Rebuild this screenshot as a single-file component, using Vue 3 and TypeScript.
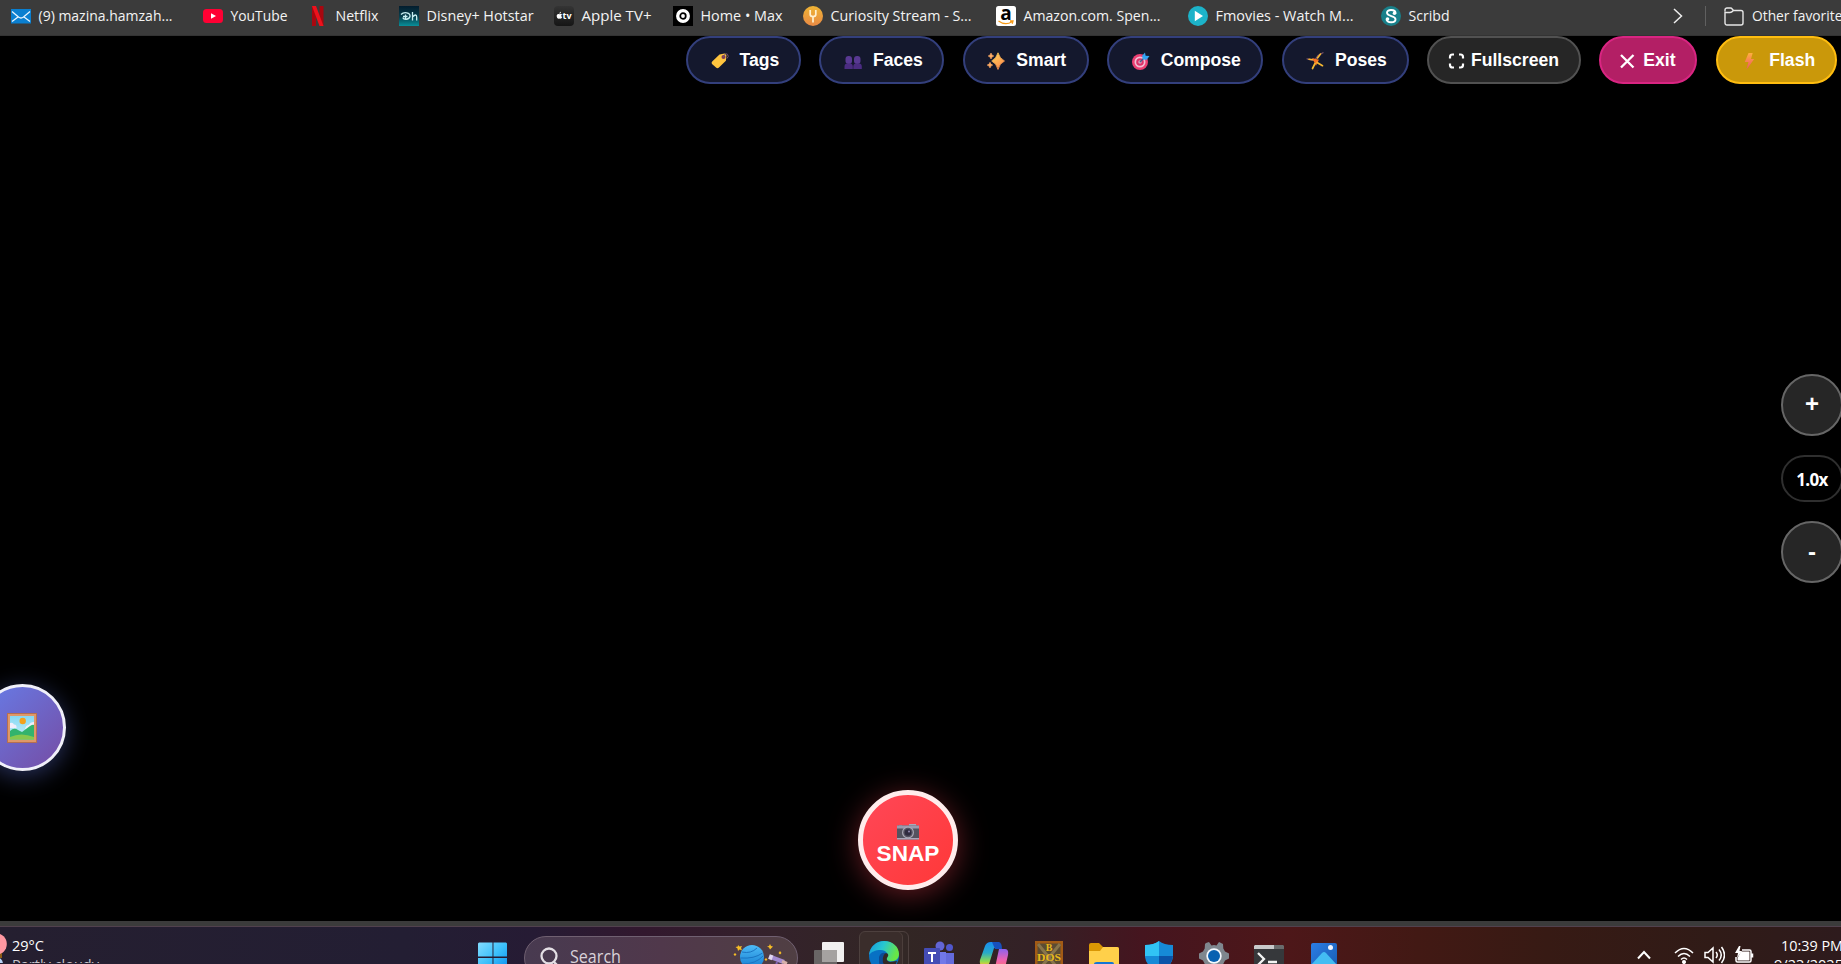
<script setup lang="ts">
interface Bookmark {
  id: string
  label: string
  width: number
}

interface Mode {
  id: string
  label: string
}

const bookmarks: Bookmark[] = [
  { id: 'mail', label: '(9) mazina.hamzah...', width: 134 },
  { id: 'youtube', label: 'YouTube', width: 57 },
  { id: 'netflix', label: 'Netflix', width: 43 },
  { id: 'disney', label: 'Disney+ Hotstar', width: 107 },
  { id: 'apple', label: 'Apple TV+', width: 70 },
  { id: 'max', label: 'Home • Max', width: 82 },
  { id: 'curiosity', label: 'Curiosity Stream - S...', width: 141 },
  { id: 'amazon', label: 'Amazon.com. Spen...', width: 137 },
  { id: 'fmovies', label: 'Fmovies - Watch M...', width: 138 },
  { id: 'scribd', label: 'Scribd', width: 41 },
]

const modes: Mode[] = [
  { id: 'tags', label: 'Tags' },
  { id: 'faces', label: 'Faces' },
  { id: 'smart', label: 'Smart' },
  { id: 'compose', label: 'Compose' },
  { id: 'poses', label: 'Poses' },
  { id: 'fullscreen', label: 'Fullscreen' },
  { id: 'exit', label: 'Exit' },
  { id: 'flash', label: 'Flash' },
]

const apps: string[] = ['tasks', 'edge', 'teams', 'copilot', 'dos', 'files', 'shield', 'settings', 'terminal', 'photos']
</script>

<template>
  <div class="screen">
    <header class="favorites">
      <nav class="links">
        <a v-for="b in bookmarks" :key="b.id" class="link">
          <svg class="fav" viewBox="0 0 20 20">
            <g v-if="b.id === 'mail'">
              <rect y="3" width="20" height="14.500" fill="#0a7fd0" />
              <path d="M1 5.500 7.500 11Q10 13 12.500 11L19 5.500M1 15.500 7 11M19 15.500 13 11" fill="none" stroke="#e8f5ff" stroke-width="1.300" />
            </g>
            <g v-else-if="b.id === 'youtube'">
              <rect y="3" width="20" height="14" rx="3.500" fill="#ff0033" />
              <path d="M8 7.200v5.600l5-2.800z" fill="#fff" />
            </g>
            <g v-else-if="b.id === 'netflix'">
              <path d="M4 0h4v20H4zM11.500 0h4v20h-4z" fill="#a8070f" />
              <path d="M4 0h4l7.500 20h-4z" fill="#ee111c" />
            </g>
            <g v-else-if="b.id === 'disney'">
              <defs><linearGradient id="dh" x2="0" y2="1"><stop stop-color="#031d2e" /><stop offset=".55" stop-color="#07404e" /><stop offset="1" stop-color="#08909a" /></linearGradient></defs>
              <rect width="20" height="20" fill="url(#dh)" />
              <path d="M2 8.500C5 5.500 11.500 6.500 11 10.500 10 14 4 14 4 11.500M4 10.500h4.500M6.500 8.500v5M13.500 6v8.500M13.500 11q4-4 4.200 0v3.500" fill="none" stroke="#c8eef1" stroke-width="1.300" />
            </g>
            <g v-else-if="b.id === 'apple'">
              <defs><linearGradient id="atv" x2="0" y2="1"><stop stop-color="#343434" /><stop offset="1" stop-color="#151515" /></linearGradient></defs>
              <rect width="20" height="20" rx="4" fill="url(#atv)" />
              <path d="M5.500 8.300C3.500 7.200 2.300 9 2.800 10.800c.5 2 1.700 2.300 2.700 1.700 1.200.6 2.200 0 2.600-1.400-1.200-.6-1.200-1.800-.1-2.600-.7-.7-1.600-.6-2.500-.2zM5.400 7.800c0-1.200.6-1.800 1.600-2 0 1.200-.6 1.900-1.600 2z" fill="#fff" />
              <text x="8.500" y="12.900" class="atv" textLength="9" lengthAdjust="spacingAndGlyphs">tv</text>
            </g>
            <g v-else-if="b.id === 'max'">
              <rect width="20" height="20" fill="#000" />
              <circle cx="10" cy="10" r="5.300" fill="none" stroke="#fff" stroke-width="3.300" />
              <circle cx="10" cy="10" r="1.900" fill="#fff" />
            </g>
            <g v-else-if="b.id === 'curiosity'">
              <defs><linearGradient id="cs" x2="0" y2="1"><stop stop-color="#eeb334" /><stop offset="1" stop-color="#e98a45" /></linearGradient></defs>
              <circle cx="10" cy="10" r="10" fill="url(#cs)" />
              <path d="M7.200 4v4.500q0 2 2.800 2 2.800 0 2.800-2V4M10 10v6.500" fill="none" stroke="#fff0cf" stroke-width="1.700" />
            </g>
            <g v-else-if="b.id === 'amazon'">
              <rect width="20" height="20" rx="2.500" fill="#fff" />
              <text x="4.200" y="13.700" class="amz">a</text>
              <path d="M2.500 15q7 5 13.500.7M14 15h3l-.8 2.700" fill="none" stroke="#f79a17" stroke-width="1.300" />
            </g>
            <g v-else-if="b.id === 'fmovies'">
              <circle cx="10" cy="10" r="10" fill="#1cb3c9" />
              <path d="M6.800 4.800v10.400l8.200-5.200z" fill="#fff" />
            </g>
            <g v-else>
              <circle cx="10" cy="10" r="10" fill="#19808a" />
              <path d="M14.600 7.200C14.300 3.200 6 2.900 6 6.800c0 4 8.500 2.500 8.500 6.400 0 4.200-8.400 4-9 .2" fill="none" stroke="#fff" stroke-width="1.900" />
              <circle cx="13.500" cy="7.300" r="1.800" fill="#fff" /><circle cx="6.500" cy="13" r="1.800" fill="#fff" />
            </g>
          </svg>
          <svg class="label" :width="b.width" height="24">
            <text x="-.5" y="17" :textLength="b.width" lengthAdjust="spacingAndGlyphs">{{ b.label }}</text>
          </svg>
        </a>
      </nav>
      <svg class="more" viewBox="0 0 10 16"><path d="M1 1l7.500 7L1 15" /></svg>
      <i class="divider"></i>
      <svg class="folder" viewBox="0 0 20 20"><path d="M1 4.500V3a2 2 0 0 1 2-2h3.500q1 0 1.700 1L9.500 3.500H17a2 2 0 0 1 2 2V16a2 2 0 0 1-2 2H3a2 2 0 0 1-2-2V5.500H6Q7.500 5.500 9.500 3.500" /></svg>
      <svg class="label" width="98" height="24"><text x="0" y="17" textLength="97" lengthAdjust="spacingAndGlyphs">Other favorites</text></svg>
    </header>

    <main class="camera">
      <div class="modes">
        <button v-for="m in modes" :key="m.id" class="mode" :class="m.id">
          <svg class="glyph" viewBox="0 0 18 18">
            <g v-if="m.id === 'tags'">
              <path d="M1.200 9.500 8.500 2.400 13.500 1.500q2 .1 1.900 2l-.5 5.200-7.200 7q-1.400 1-2.700-.2L1 12q-1-1.200.2-2.500z" fill="#ffc43e" />
              <circle cx="12.500" cy="5" r="2" fill="#7d3c56" /><path d="M12.500 5q1.500-4.500 4-2.700 1.800 2-.6 4.300" fill="none" stroke="#78506e" />
            </g>
            <g v-else-if="m.id === 'faces'" fill="#593993">
              <rect x="1.500" y="4" width="6.500" height="8" rx="3" /><rect x="10" y="4" width="6.500" height="8" rx="3" />
              <path d="M.5 17v-2.500q0-3 3-3h2.500q2.800 0 2.800 3V17zM9.300 17v-2.500q0-3 3-3H15q2.800 0 2.800 3V17z" fill="#4b2c82" />
            </g>
            <g v-else-if="m.id === 'smart'">
              <defs><linearGradient id="sp" x2=".6" y2="1"><stop stop-color="#ffd85b" /><stop offset="1" stop-color="#ff8d4c" /></linearGradient></defs>
              <path d="M11 .8q1.500 5.500 6.500 8.200-5 2.300-6.500 8.500Q9.500 11.300 4.700 9 9.500 6.300 11 .8z" fill="url(#sp)" stroke="url(#sp)" stroke-width=".8" />
              <path d="M4 1q.5 2.500 2.800 3Q4.500 4.500 4 7 3.500 4.500 1.200 4 3.500 3.500 4 1zM3 10.300q.4 2.300 2.700 2.800Q3.400 13.600 3 16 2.600 13.600.2 13.100 2.600 12.600 3 10.300z" fill="#ffab64" stroke="#ffab64" stroke-width=".6" />
            </g>
            <g v-else-if="m.id === 'compose'">
              <circle cx="8" cy="10" r="8" fill="#ec3f72" /><circle cx="8" cy="10" r="5.500" fill="#f0bfd4" /><circle cx="8" cy="10" r="3.800" fill="#dc3268" /><circle cx="8" cy="10" r="1.800" fill="#db9ab8" />
              <path d="M8 10l5-5" stroke="#435e8b" stroke-width="1.500" /><path d="M10 4 13 .5l.6 3.200L17.500 4l-2.800 3.700-3.600-.3z" fill="#32a4f4" />
            </g>
            <g v-else-if="m.id === 'poses'" fill="none" stroke-linecap="round">
              <path d="M1 6.800 6 8h3l3-4.500L17 .8" stroke="#76506b" stroke-width="1.300" />
              <path d="M3 7.300l4 .4M11.500 6l3-4" stroke="#f7b932" stroke-width="1.600" />
              <path d="M8 7.500l2 4 1.500-3z" fill="#f97324" stroke="#f97324" stroke-width="2" />
              <path d="M9 11.500 6.500 16.500M11 10.500l5.500 3.200" stroke="#f5b832" stroke-width="1.700" />
            </g>
            <path v-else-if="m.id === 'fullscreen'" d="M2 6.500V5q0-2.500 2.500-2.500H6M11 2.500h1.500Q15 2.500 15 5v1.500M15 11.500V13q0 2.500-2.500 2.500H11M6 15.500H4.500Q2 15.500 2 13v-1.500" fill="none" stroke="#fff" stroke-width="2.200" />
            <path v-else-if="m.id === 'exit'" d="M2 3 14.500 15.500M14.500 3 2 15.500" fill="none" stroke="#fff" stroke-width="2.300" />
            <g v-else>
              <defs><linearGradient id="fl" x2="0" y2="1"><stop stop-color="#ffb03f" /><stop offset="1" stop-color="#ef536b" /></linearGradient></defs>
              <path d="M8.500 1h4.200L11 7h3.200L6.500 17.500 8.500 10H4.800z" fill="url(#fl)" />
            </g>
          </svg>
          <span>{{ m.label }}</span>
        </button>
      </div>

      <aside class="zoom">
        <button class="step">+</button>
        <output class="level">1.0x</output>
        <button class="step minus">-</button>
      </aside>

      <button class="gallery">
        <svg viewBox="0 0 30 30">
          <defs><linearGradient id="sky" x2="0" y2="1"><stop stop-color="#86d9f4" /><stop offset="1" stop-color="#c9effa" /></linearGradient></defs>
          <rect width="30" height="30" fill="#b66f50" /><rect x="1" y="1" width="28" height="28" fill="#df9868" />
          <rect x="3" y="3" width="24" height="23.500" fill="url(#sky)" />
          <path d="M3 10q3-1 4 1.500 3 0 2.500 3.500H3zM27 9q-4 0-5 3-3 0-4 4h9z" fill="#f1eefb" />
          <circle cx="15.700" cy="8" r="3.200" fill="#f4a11d" />
          <path d="M3 18q4-4 8-1l4 2 8-6q3-2 4-1v14.500H3z" fill="#32b36d" />
          <path d="M3 24q11-5 24 0v2.500H3z" fill="#86c84e" />
        </svg>
      </button>

      <button class="snap">
        <svg viewBox="0 0 22 16">
          <path d="M2 1h3v2H2zM12 0h7v3h-7z" fill="#a9a8b9" />
          <rect y="1.500" width="22" height="14" rx="1" fill="#55535f" />
          <rect y="1.500" width="22" height="3" fill="#9b9aad" /><rect y="14" width="22" height="1.500" fill="#aaa9bc" />
          <circle cx="11" cy="8.500" r="6" fill="#aaa7b6" /><circle cx="11" cy="8.500" r="4.800" fill="#555260" /><circle cx="11" cy="8.500" r="3.300" fill="#302b40" /><circle cx="12" cy="7.500" r="1" fill="#9389b0" />
        </svg>
        <span>SNAP</span>
      </button>
    </main>

    <footer class="taskbar">
      <div class="weather">
        <svg class="sun" viewBox="0 0 8 37"><circle cx="-4" cy="18" r="10.800" fill="#ff98a2" /><path d="M0 28l2-1v5H0z" fill="#8c5b16" /><circle cx="-4" cy="38" r="7" fill="#b9d4f7" /></svg>
        <svg class="reading" width="100" height="37">
          <text x="0" y="24.500" textLength="32" lengthAdjust="spacingAndGlyphs">29°C</text>
          <text x="0" y="44" class="dim" textLength="87" lengthAdjust="spacingAndGlyphs">Partly cloudy</text>
        </svg>
      </div>
      <svg class="start" viewBox="0 0 30 30">
        <defs><linearGradient id="win" x2="1" y2="1"><stop stop-color="#83dcff" /><stop offset=".5" stop-color="#3cc0fb" /><stop offset="1" stop-color="#078bef" /></linearGradient></defs>
        <path d="M1 0h14v14.500H0V1zM16 0h13l1 1v13.500H16zM0 16h15v14H0zM16 16h14v14H16z" fill="url(#win)" />
      </svg>
      <div class="search">
        <svg class="lens" viewBox="0 0 22 24"><circle cx="9" cy="9" r="7.500" /><path d="M14 15l7 7" /></svg>
        <svg class="hint" width="53" height="30"><text x="0" y="20" textLength="51" lengthAdjust="spacingAndGlyphs">Search</text></svg>
        <svg class="space" viewBox="0 0 56 28">
          <defs><linearGradient id="pl" x2="0" y2="1"><stop stop-color="#4dbbf6" /><stop offset="1" stop-color="#147bd0" /></linearGradient></defs>
          <circle cx="19" cy="13" r="12" fill="url(#pl)" />
          <path d="M9 8q9 2 15-4M7.500 14q14 1 22-5M9 20q14 0 21-8" fill="none" stroke="#1a74c2" stroke-width="1" />
          <path d="M5 1l1.500 1.500L9 2 8 4l1 2.300-2.500-.8L5 7 4.500 4.500 2.500 3l2.300-.5zM37 0l1 2 2 .5-1.500 1.500L37 5.500 36 3.500l-2-1 2-.5zM2 9l1.500 1.500L2 12 .5 10.500zM47 7l1.500 2L47 10.500 45.500 9zM33 14l1.500 1.500L33 17l-1.500-1.500z" fill="#f6bd26" />
          <path d="M39 13.500 51 18" stroke="#a38bd0" stroke-width="4.500" /><path d="M36 12.500l3.500 1.300" stroke="#e0d6f2" stroke-width="5" /><path d="M49 17.500l5 2" stroke="#d6b1aa" stroke-width="3" /><path d="M44 18l-3 10" stroke="#8262b2" stroke-width="2" />
        </svg>
      </div>
      <div class="apps">
        <div v-for="app in apps" :key="app" class="slot" :class="{ active: app === 'edge' }">
          <svg viewBox="0 0 30 30">
            <g v-if="app === 'tasks'">
              <rect x="8" y="1" width="22" height="20" rx="1" fill="#f1f0f0" /><rect x="0" y="9" width="23" height="21" rx="1" fill="#696565" /><rect x="8" y="9" width="15" height="12" fill="#a5a2a1" />
            </g>
            <g v-else-if="app === 'edge'">
              <defs><linearGradient id="ed" x2="1" y2=".3"><stop stop-color="#1698dc" /><stop offset=".5" stop-color="#27c6d1" /><stop offset="1" stop-color="#68e646" /></linearGradient></defs>
              <circle cx="15" cy="15" r="15" fill="#0871c4" />
              <path d="M0 14C1 5 8 0 15 0c9 0 15 6 15 13 0 6-5 8-10 7-4-1-3-2-2-4 2-3-1-7-6-7-6 0-10 2-12 5z" fill="url(#ed)" />
              <path d="M17 17q2-3-1-5-4-1-6 4v6q2 5 7 6 8 1 11-3l-5 5h-8z" fill="#0c4c96" /><path d="M17 12q4 1 1 5-1 3 3 4l7-1-2 5h-9l-3-3q-1-8 3-10z" fill="#332826" />
            </g>
            <g v-else-if="app === 'teams'">
              <circle cx="16" cy="5" r="4.500" fill="#6265d5" /><circle cx="25.500" cy="6.500" r="3.500" fill="#5057cc" /><path d="M10 11h12v19H10z" fill="#7178e9" /><path d="M22 12h8v14h-8z" fill="#646bdc" />
              <rect y="7" width="16" height="18" rx="1" fill="#444cb5" /><path d="M4 12h8M8 12v9" stroke="#fff" stroke-width="2" />
            </g>
            <g v-else-if="app === 'copilot'">
              <defs><linearGradient id="ca" x2="0" y2="1"><stop stop-color="#188df1" /><stop offset=".45" stop-color="#28aac9" /><stop offset=".8" stop-color="#8cda52" /><stop offset="1" stop-color="#ffc52f" /></linearGradient><linearGradient id="cb" x2="0" y2="1"><stop stop-color="#8c62ee" /><stop offset=".5" stop-color="#ef62af" /><stop offset="1" stop-color="#fb795b" /></linearGradient></defs>
              <path d="M6 5q1.500-4 6-4h7q3 1 1 6h-5l-4 13q-1 5-5 5H4q-4-1-3-6z" fill="url(#ca)" />
              <path d="M20 8h6q4 0 3 6l-3 13q-1 3-5 3h-8q3-2 4-8z" fill="url(#cb)" /><path d="M13 1h7q3 1 3 7h-7z" fill="#1750bd" />
            </g>
            <g v-else-if="app === 'dos'">
              <rect x="1" width="28" height="30" fill="#a35b15" /><rect x="3.500" y="2.500" width="23" height="28" fill="#5b4c33" /><path d="M4 3l22 27M26 3 4 30" stroke="#88754b" stroke-width="3" />
              <text x="15" y="9.500" class="dos">B</text><text x="15" y="20" class="dos" textLength="24" lengthAdjust="spacingAndGlyphs">DOS</text><text x="15" y="31" class="dos">X</text>
            </g>
            <g v-else-if="app === 'files'">
              <path d="M0 4q0-2 2-2h8l4 4h14q2 0 2 2v22H0z" fill="#d99704" /><path d="M0 10h11l3-4h14q2 0 2 2v22H0z" fill="#ffd04a" /><path d="M5 30v-7q0-2 3-2h15q2 0 2 2v7z" fill="#1475d4" />
            </g>
            <g v-else-if="app === 'shield'">
              <path d="M15 0q5 4 14 4v12q-1 9-14 16Q2 25 1 16V4q9 0 14-4z" fill="#168ad7" /><path d="M15 0Q10 4 1 4v11h14z" fill="#31c3f5" /><path d="M15 15h14q-1 10-14 17z" fill="#0b53a8" />
            </g>
            <g v-else-if="app === 'settings'">
              <path d="M7 2 10 1l2.500 3.500q2.500-.8 5 0L20 1l4 2 .3 4.500 1.700 3 4 2v5l-4 2-2 4-2 5H8l-2-5-2-4-4-2v-5l4-2 1.700-3L6 3z" fill="#7f878e" /><circle cx="15" cy="15" r="7.700" fill="#f5f9fd" /><circle cx="15" cy="15" r="6" fill="#0961b1" />
            </g>
            <g v-else-if="app === 'terminal'">
              <rect y="4" width="30" height="28" rx="1.500" fill="#36383b" /><path d="M1 4h9v4H0V5zM10 4h10v4H10z" fill="#c8c9ca" /><path d="M20 4h9l1 1v3H20z" fill="#696b6c" /><path d="M4 12l6 6-6 6M14 21h9" fill="none" stroke="#f3f4f4" stroke-width="2.300" />
            </g>
            <g v-else>
              <defs><linearGradient id="ph" x2="1" y2="1"><stop stop-color="#2b7de5" /><stop offset="1" stop-color="#175aae" /></linearGradient></defs>
              <rect x="2" y="2" width="26" height="30" rx="2" fill="url(#ph)" /><circle cx="21.500" cy="6.500" r="2.500" fill="#eef5ff" /><path d="M2 24 13 12q2-2 4 0l11 12v6H2z" fill="#43bdf3" /><path d="M8 30l6-7h2l7 7z" fill="#e2f7ff" />
            </g>
          </svg>
        </div>
      </div>
      <div class="tray">
        <svg class="up" viewBox="0 0 14 10"><path d="M1 8.500 7 2l6 6.500" /></svg>
        <svg class="wifi" viewBox="0 0 20 17"><path d="M1 6Q10-3 19 6M4 9.500q6-6 12 0M7 12.500q3-3 6 0" /><circle cx="10" cy="15" r="1.300" fill="#fff" /></svg>
        <svg class="sound" viewBox="0 0 21 18"><path d="M1 6.500h3L9 2v14l-5-4.500H1zM12 6q2.500 3 0 6M15 3.500q4.500 5.500 0 11M17.500 1q6 8 0 16" /></svg>
        <svg class="power" viewBox="0 0 20 17"><path d="M8 4h7.500q1.500 0 1.500 1.500v9q0 1.500-1.500 1.500h-12Q2 16 2 14.500V11M18.500 7.500v4" /><path d="M7 5.500h8.500v9h-12V12z" fill="#fff" stroke="none" /><path d="M5 0 1 7h3l-1 5 5-7H5.500L6.500 0z" fill="#fff" stroke="none" /></svg>
        <svg class="clock" width="76" height="37">
          <text x="7" y="24.500" textLength="62" lengthAdjust="spacingAndGlyphs">10:39 PM</text>
          <text x="0" y="44" textLength="69" lengthAdjust="spacingAndGlyphs">9/23/2025</text>
        </svg>
      </div>
    </footer>
  </div>
</template>

<style>
body {
  margin: 0;
  overflow: hidden;
  background: #000;
}
</style>

<style scoped>
* {
  box-sizing: border-box;
}
.screen {
  width: 1841px;
  height: 964px;
  display: flex;
  flex-direction: column;
  overflow: hidden;
  background: #000;
  font-family: "Open Sans", "Noto Sans", sans-serif;
}
svg {
  display: block;
  flex: none;
}
button {
  margin: 0;
  padding: 0;
  color: #fff;
  font-family: "Liberation Sans", Arial, sans-serif;
  font-weight: 700;
}
.favorites {
  flex: none;
  height: 36px;
  padding: 4px 0 0 11px;
  display: flex;
  align-items: flex-start;
  background: #3b3b3b;
  border-bottom: 1px solid #333;
}
.links {
  flex: none;
  width: 1662px;
  display: grid;
  grid-template-columns: 192px 105px 91px 155px 119px 130px 193px 192px 193px 1fr;
}
.link {
  display: flex;
  gap: 8px;
}
.fav {
  width: 20px;
  height: 20px;
  margin-top: 2px;
}
.label {
  font-size: 15px;
  fill: #f3f3f3;
  overflow: visible;
}
.atv {
  font: 700 8px "Open Sans", sans-serif;
  fill: #fff;
}
.amz {
  font: 700 19px "Open Sans", sans-serif;
  fill: #000;
}
.more {
  width: 10px;
  height: 16px;
  margin-top: 4px;
  fill: none;
  stroke: #eee;
  stroke-width: 1.5;
}
.divider {
  flex: none;
  width: 1px;
  height: 20px;
  margin: 2px 18px 0 22px;
  background: #606060;
}
.folder {
  width: 20px;
  height: 20px;
  margin: 3px 8px 0 0;
  fill: none;
  stroke: #e6e6e6;
  stroke-width: 1.4;
}
.camera {
  position: relative;
  flex: none;
  height: 885px;
}
.modes {
  display: flex;
  gap: 18.4px;
  padding-left: 686px;
}
.mode {
  flex: none;
  height: 48px;
  display: flex;
  align-items: center;
  padding-left: 22.500px;
  gap: 11px;
  border: 2px solid #333f7c;
  border-radius: 24px;
  background: #14182d;
  font-size: 17.6px;
  line-height: 20px;
}
.glyph {
  width: 18px;
  height: 18px;
  margin-top: 1px;
}
.tags { width: 115px; }
.faces { width: 125px; }
.smart { width: 126px; }
.compose { width: 156px; }
.poses { width: 127px; }
.fullscreen {
  width: 154px;
  padding-left: 19px;
  gap: 5px;
  border-color: #515151;
  background: #262626;
}
.exit {
  width: 98px;
  padding-left: 18px;
  gap: 6px;
  border-color: #d92582;
  background: #b31f65;
}
.flash {
  width: 121.500px;
  gap: 11px;
  border-color: #ffbd10;
  background: #ca980a;
}
.zoom {
  position: absolute;
  left: 1781px;
  top: 338px;
  width: 62px;
  display: flex;
  flex-direction: column;
  gap: 19px;
}
.step {
  width: 62px;
  height: 62px;
  padding-bottom: 3px;
  border: 2px solid #666;
  border-radius: 50%;
  background: #262626;
  font-size: 24px;
}
.minus {
  padding-bottom: 1px;
}
.level {
  height: 47px;
  border: 2px solid #2f2f2f;
  border-radius: 23.5px;
  color: #fff;
  font: 700 17px/46px "Open Sans", sans-serif;
  letter-spacing: -0.7px;
  text-align: center;
}
.gallery {
  position: absolute;
  left: -21px;
  top: 648px;
  width: 87px;
  height: 87px;
  display: grid;
  place-items: center;
  border: 3px solid #f0f0fa;
  border-radius: 50%;
  background: linear-gradient(135deg, #667eea, #764ba2) border-box;
  box-shadow: 0 5px 24px rgba(102, 126, 234, 0.4);
}
.gallery svg {
  width: 30px;
  height: 30px;
  margin: 1px 1px 0 0;
}
.snap {
  position: absolute;
  left: 858px;
  top: 754px;
  width: 100px;
  height: 100px;
  display: flex;
  flex-direction: column;
  align-items: center;
  padding-top: 29px;
  border: 5px solid #ffecec;
  border-radius: 50%;
  background: linear-gradient(135deg, #ff4757, #ff3838);
  box-shadow: 0 5px 30px rgba(255, 71, 87, 0.4);
  font-size: 22.6px;
  line-height: 26px;
}
.snap svg {
  width: 22px;
  height: 16px;
}
.snap span {
  margin-top: 1px;
}
.taskbar {
  flex: none;
  height: 43px;
  display: flex;
  align-items: flex-start;
  overflow: hidden;
  border-top: 5px solid #3b3b3b;
  background: linear-gradient(90deg, #251f30 0, #231e33 22%, #261b34 29%, #32182e 35%, #34222b 42%, #322624 49%, #332126 56%, #45151f 62%, #4d1719 70%, #421914 77%, #371a14 84%, #301b17 93%, #2e1b1d 100%);
  box-shadow: inset 0 1px #51414d;
}
.weather {
  flex: none;
  width: 478px;
  display: flex;
  gap: 4px;
  font-size: 15px;
  fill: #fff;
}
.sun {
  width: 8px;
  height: 37px;
}
.dim {
  fill: #c9c5cc;
}
.start {
  width: 29px;
  height: 30px;
  margin-top: 16px;
}
.search {
  flex: none;
  width: 274px;
  height: 44px;
  margin: 10px 3.500px 0 17px;
  padding: 10px 0 0 15px;
  display: flex;
  border: 1px solid #706071;
  border-radius: 22px;
  background: linear-gradient(90deg, #483a50, #50384b 50%, #503f43);
}
.lens {
  width: 22px;
  height: 24px;
  fill: none;
  stroke: #e4dfe5;
  stroke-width: 2.3;
}
.hint {
  margin: -4px 110px 0 8px;
  font-size: 17.5px;
  fill: #d9d1d9;
}
.space {
  width: 56px;
  height: 28px;
  margin-top: -3px;
}
.apps {
  flex: none;
  display: grid;
  grid-template-columns: repeat(10, 55px);
}
.slot {
  height: 50px;
  margin-top: 5px;
  padding: 10px 0 0 12.500px;
}
.slot svg {
  width: 30px;
  height: 30px;
}
.active {
  width: 50px;
  margin-left: 2px;
  padding: 9px 0 0 9.500px;
  border: 1px solid #4d403e;
  border-radius: 6px;
  background: #3a2d2b;
  box-shadow: inset -5px 0 #332826, inset -6px 0 #4b3e3b;
}
.dos {
  font: 700 10px "Liberation Serif", serif;
  fill: #e8b91a;
  text-anchor: middle;
}
.tray {
  flex: none;
  margin-left: 285px;
  display: flex;
  align-items: flex-start;
  fill: none;
  stroke: #fff;
  stroke-width: 1.5;
}
.up {
  width: 14px;
  height: 10px;
  margin: 24px 23px 0 0;
  stroke-width: 2;
}
.wifi {
  width: 20px;
  height: 17px;
  margin: 21px 10px 0 0;
}
.sound {
  width: 21px;
  height: 18px;
  margin: 20px 9px 0 0;
}
.power {
  width: 20px;
  height: 17px;
  margin: 20px 20px 0 0;
}
.clock {
  font-size: 15px;
  fill: #fff;
  stroke: none;
}
</style>
